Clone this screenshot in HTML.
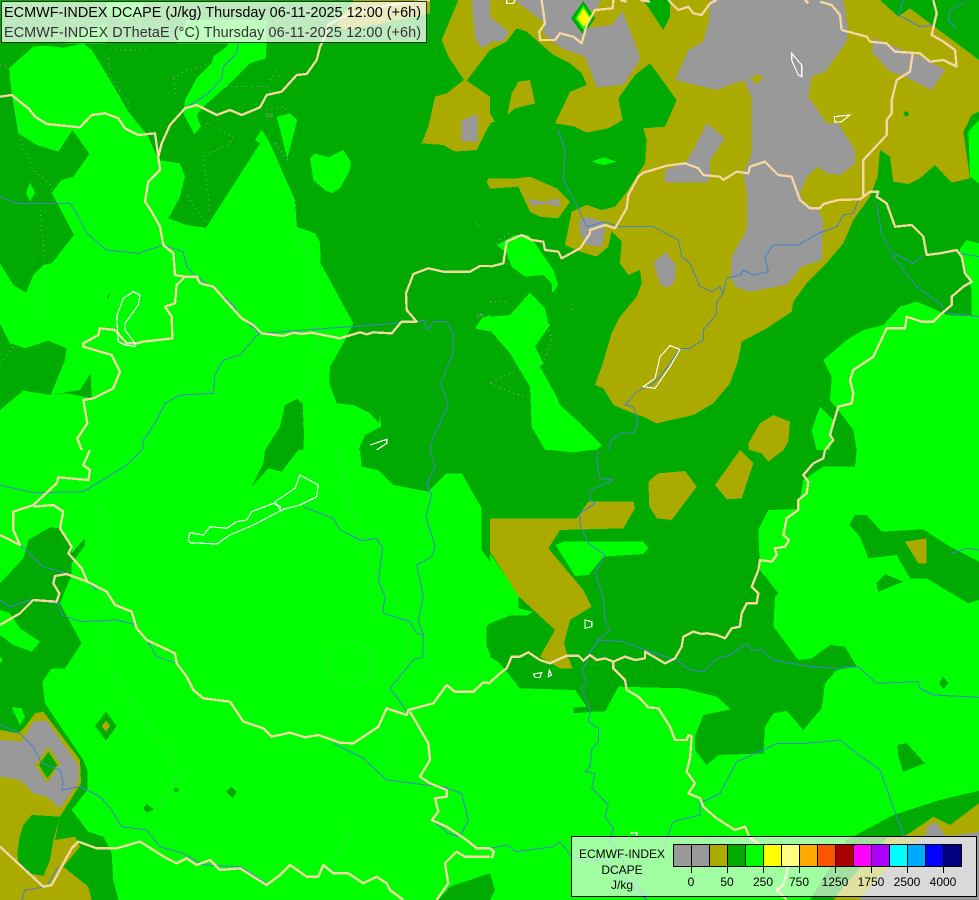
<!DOCTYPE html>
<html>
<head>
<meta charset="utf-8">
<style>
html,body{margin:0;padding:0;background:#0f0;width:979px;height:900px;overflow:hidden}
svg{display:block}
.d{fill:#00aa00}.g{fill:#00ff00}.o{fill:#aaaa00}.y{fill:#999999}.ye{fill:#ffff00}
.b{fill:none;stroke:#f5d7a3;stroke-width:7;stroke-linejoin:round}
.r{fill:none;stroke:#4480cc;stroke-width:3;stroke-linejoin:round}
.w{fill:none;stroke:#fff;stroke-width:3.5}
.p{fill:none;stroke:#b890d0;stroke-width:3;stroke-dasharray:3 12}
text{font-family:"Liberation Sans",sans-serif}
</style>
</head>
<body>
<svg width="979" height="900" viewBox="0 0 979 900" shape-rendering="crispEdges">

<!-- top-left -->
<svg x="0" y="0" width="490" height="450" viewBox="0 0 1470 1350">
<rect class="d" width="1470" height="1350"/>
<polygon class="g" points="100,140 135,137 190,143 250,130 275,150 330,240 385,335 445,410 475,480 540,490 555,530 540,590 505,655 560,675 618,683 780,430 765,420 785,390 805,420 885,600 890,680 945,700 960,725 962,790 1060,970 1030,1030 990,1100 988,1150 1010,1210 1060,1215 1110,1240 1137,1270 1140,1240 1143,1280 1095,1305 1075,1350 910,1350 912,1300 908,1210 890,1197 855,1215 840,1280 795,1350 0,1350 0,790 40,855 78,878 100,825 130,795 155,790 222,705 155,578 185,540 220,530 268,462 218,390 175,455 110,435 55,400 35,280 27,205"/>
<polygon class="d" points="0,970 30,1030 75,1045 145,1022 200,1045 195,1080 152,1185 70,1172 0,1230"/>
<polygon class="d" points="152,1185 200,1180 250,1190 275,1195 272,1120 240,1170"/>
<polygon class="d" points="320,892 332,880 322,898"/>
<polygon class="g" points="90,548 105,578 90,605 78,578"/>
<polygon class="g" points="555,300 590,235 635,190 640,170 680,140 700,100 800,100 798,175 750,190 690,250 610,320 590,345 603,380 583,403 550,340"/>
<polygon class="g" points="530,130 560,60 800,60 800,130"/>
<polygon class="g" points="320,5 430,5 440,40 380,60 320,45"/>
<polygon class="g" points="195,130 240,95 320,70 320,130"/>
<polygon class="g" points="830,350 870,340 892,360 862,475"/>
<polygon class="g" points="930,475 945,460 985,472 1030,450 1052,485 1050,510 1020,565 995,580 975,570 940,540"/>
<polygon class="g" points="1425,985 1445,955 1470,945 1470,995"/>
<polygon class="o" points="1375,0 1325,120 1345,170 1392,240 1340,280 1305,290 1285,380 1265,430 1330,435 1365,455 1430,450 1465,380 1470,375 1470,290 1400,242 1470,150 1470,0"/>
<polygon class="y" points="1415,0 1425,115 1445,145 1470,130 1470,0"/>
<polygon class="y" points="1385,360 1432,343 1432,425 1385,425"/>
<polygon class="o" points="1460,545 1470,530 1470,565"/>
<polygon class="o" points="1060,0 1010,75 1040,90 1120,75 1290,40 1290,0"/>
<path class="p" d="M0,195L25,200M40,300L60,420L100,510L160,560M120,630L135,790L125,950M325,175L330,230L385,310L395,370M520,235L530,290M520,235L560,210L620,195M680,260L800,260L815,280M810,240L830,215L845,240M800,330L850,320L880,370M620,370L700,410L690,430L610,470L630,640M330,150L440,150M550,560L580,620L620,670M825,430L870,490M885,600L890,680L930,790L930,900L960,1000L945,1100L900,1200L912,1290M0,1090L40,1040M1425,665L1440,680"/>
<path class="r" d="M0,590L45,610L210,610L230,640L260,700L320,750L415,760L490,735L550,755L560,800L590,830L660,880L700,915L720,950L780,1000L765,1012L720,1065L670,1080L645,1125L640,1180L540,1185L495,1210L465,1270L430,1320L428,1350"/>
<path class="r" d="M715,130L710,160L670,200L665,235L625,280L555,325L510,375L480,450"/>
<path class="r" d="M780,1000L1250,965L1275,960L1280,990L1300,965L1340,965L1360,1000L1358,1060L1322,1150L1345,1215L1300,1310L1290,1350"/>
<path class="b" d="M0,290L35,285L85,325L105,350L140,372L240,382L275,345L315,340L355,355L375,385L415,405L465,400L475,470L480,510L445,545L435,605L455,635L480,680L490,735L520,760L525,825L555,830L530,855L525,910L495,920L515,950L517,1015L430,1025L410,1030L380,1030L345,990L300,985L295,1005L250,1030L250,1040L335,1065L360,1115L340,1165L280,1195L250,1200L262,1270L232,1315L245,1350"/>
<path class="b" d="M475,470L485,430L510,375L555,325L590,315L650,345L690,330L725,345L780,322L800,285L845,275L890,225L920,222L950,180L960,140L975,110L985,75L1020,55L1060,40L1120,25L1170,15L1290,0"/>
<path class="b" d="M555,830L590,830L600,850L640,860L680,905L725,955L760,975L785,1000L850,1008L880,998L905,1002L935,998L1020,1015L1080,997L1100,1003L1120,997L1175,1000L1205,965L1250,965L1220,930L1218,880L1240,822L1285,805L1330,815L1410,815L1440,798L1470,798"/>
<path class="w" d="M400,875L420,885L415,915L375,970L375,990L405,1030L405,1040L375,1035L355,1025L350,950L370,895Z"/>
<path class="w" d="M1110,1335L1160,1318L1160,1330L1130,1350"/>
<text x="0" y="0" font-size="27" fill="#8a9a8a" transform="translate(800,337) rotate(100)">5</text>
<text x="0" y="0" font-size="27" fill="#8a9a8a" transform="translate(1432,938) rotate(100)">5</text>
</svg>

<!-- top-right -->
<svg x="490" y="0" width="489" height="450" viewBox="0 0 1467 1350">
<rect class="d" width="1467" height="1350"/>
<polygon class="o" points="0,0 1170,0 1225,50 1260,25 1340,85 1467,180 1467,335 1445,345 1420,395 1440,535 1385,548 1335,495 1290,535 1255,552 1210,545 1200,470 1170,450 1163,530 1140,590 1090,660 1060,730 1000,800 950,850 910,905 905,935 830,985 755,1025 745,1080 720,1150 670,1210 610,1245 500,1270 460,1250 430,1240 370,1215 340,1165 315,1155 335,1100 365,1000 390,950 440,890 455,850 450,810 415,825 390,790 395,725 365,695 355,740 320,770 270,755 225,735 245,635 290,615 335,630 375,620 415,570 445,520 465,490 470,420 460,385 525,380 560,300 480,190 435,225 385,295 398,360 355,385 290,398 255,380 195,370 240,275 290,255 275,220 240,190 190,165 150,130 110,95 80,85 50,125 0,150"/>
<polygon class="d" points="460,0 540,0 540,50 520,90"/>
<polygon class="d" points="1240,340 1248,332 1257,342 1248,352"/>
<polygon class="y" points="75,0 330,0 325,20 290,40 285,85 365,75 398,35 452,175 400,255 320,262 285,170 215,145 160,100 165,70"/>
<polygon class="y" points="0,50 55,95 40,125 0,125"/>
<polygon class="y" points="660,0 1060,0 1075,90 1070,125 1005,215 965,230 955,290 1010,370 1045,370 1095,450 1095,490 1050,525 1010,520 985,500 950,530 930,580 945,610 985,630 1000,660 995,780 935,800 890,855 780,875 735,860 722,830 725,770 770,690 772,590 760,520 785,460 785,295 765,245 745,245 680,270 555,240 595,150 640,125 658,60"/>
<polygon class="o" points="780,235 805,222 820,232 800,252"/>
<polygon class="y" points="1155,115 1190,130 1250,155 1290,170 1365,210 1325,270 1235,225 1200,215 1145,155"/>
<polygon class="y" points="525,510 585,490 610,450 650,370 705,415 660,480 660,530 650,548 525,548"/>
<polygon class="y" points="490,790 527,755 557,795 555,845 530,865 510,850"/>
<polygon class="y" points="268,660 290,650 340,665 345,690 335,740 290,735 270,700"/>
<polygon class="o" points="0,535 80,535 120,530 200,565 240,605 205,655 150,650 120,635 85,560 20,565 0,565"/>
<polygon class="y" points="115,598 165,605 205,595 212,620 165,612 125,617"/>
<polygon class="o" points="65,280 85,245 120,240 135,310 75,325 52,345"/>
<polygon class="o" points="0,340 15,365 0,370"/>
<polygon class="g" points="305,485 340,472 380,485 340,495"/>
<polygon class="d" points="280,3 315,55 280,105 243,55"/>
<polygon class="g" points="280,15 305,55 280,90 255,55"/>
<polygon class="ye" points="280,24 300,55 280,80 262,55"/>
<polygon class="g" points="0,950 60,945 120,878 165,925 175,970 180,975 135,1040 160,1090 150,1100 200,1190 210,1215 270,1270 335,1335 320,1350 165,1350 125,1280 120,1160 60,1060 0,990"/>
<polygon class="g" points="20,735 75,705 115,705 135,730 190,810 205,855 187,880 185,850 160,825 105,830 65,800 50,760"/>
<polygon class="g" points="1000,1080 1070,1020 1120,990 1180,975 1230,920 1280,905 1340,930 1370,945 1467,950 1467,1350 1100,1350 1090,1290 1060,1250 1020,1200 1025,1130"/>
<polygon class="g" points="990,1220 1030,1260 1020,1350 980,1350 965,1290"/>
<polygon class="g" points="1410,745 1430,720 1467,730 1467,950 1445,945 1445,870 1425,800 1410,770"/>
<polygon class="g" points="1435,395 1467,360 1467,550 1440,530"/>
<polygon class="o" points="775,1330 810,1270 850,1245 900,1265 895,1325 880,1350 775,1350"/>
<path class="p" d="M20,730L60,695M0,905L50,905L90,940L170,970L185,1020L160,1090L60,1120L0,1150M0,1150L70,1180L130,1195L180,1170M50,790L135,770M245,910L245,930"/>
<path class="r" d="M205,390L225,450L220,540L265,625L290,680L345,665L385,680L490,680L565,720L575,770L600,790L630,860L665,875L690,860L700,880L680,905L678,945L640,990L640,1020L600,1045L570,1045L540,1090L510,1130L490,1150L440,1175L405,1215L430,1220L445,1265L430,1300L395,1298L365,1320L355,1350"/>
<path class="r" d="M700,880L710,835L750,825L760,810L790,825L835,815L825,770L850,735L925,735L985,700L1040,680L1060,645L1090,640L1105,600"/>
<path class="r" d="M1160,610L1175,700L1210,770L1280,860L1350,910L1375,940L1467,950M1210,760L1270,790L1300,765M1410,760L1467,770"/>
<path class="r" d="M1240,0L1225,45L1290,80L1330,75M1430,5L1380,30L1375,60L1400,85"/>
<path class="b" d="M0,800L40,790L50,725L95,705L125,720L160,725L165,750L205,755L215,775L270,745L300,700L300,690L345,675L375,685L410,625L415,585L445,530L460,518L530,497L585,490L625,505L640,525L690,530L700,540L740,515L775,520L780,500L825,485L865,525L905,530L930,600L960,625L990,625L1000,612L1045,600L1110,598L1140,575L1165,575L1160,590L1190,610L1215,680L1265,675L1300,710L1310,765L1350,760L1400,750L1415,770L1425,820L1445,845L1420,860L1385,890L1385,915L1350,945L1330,965L1295,965L1250,950L1245,985L1190,985L1150,1070L1090,1110L1080,1140L1090,1180L1085,1210L1045,1220L1030,1270L1020,1305L1030,1320L1005,1350"/>
<path class="b" d="M1120,590L1120,480L1190,405L1190,360L1205,340L1205,300L1220,240L1260,215L1268,160M1055,90L1130,110L1140,125L1190,130L1215,155L1290,160L1320,185L1360,180L1400,200L1395,150L1360,125L1325,105L1340,40L1330,0M1055,90L1050,45L1025,15L990,5"/>
<path class="b" d="M155,0L165,70L148,95L150,120L195,120L210,100L250,110L275,130L290,75L315,30L368,25L370,0M535,0L565,30L595,20L610,40L635,45L660,10L680,0M945,0L955,10M390,0L410,5M450,0L480,5"/>
<path class="w" d="M905,160L935,195L935,230L925,225L905,180Z"/>
<path class="w" d="M1033,350L1080,345L1055,365L1035,367Z"/>
<path class="w" d="M540,1037L570,1048L540,1100L495,1165L460,1160L495,1135L510,1070Z"/>
<path class="w" d="M50,0L50,10L70,10L75,0"/>
</svg>

<!-- bottom-left -->
<svg x="0" y="450" width="490" height="450" viewBox="0 0 1470 1350">
<rect class="g" width="1470" height="1350"/>
<polygon class="d" points="795,0 895,0 845,65 805,55 755,110 790,40"/>
<polygon class="d" points="1080,0 1470,0 1470,335 1445,300 1445,175 1385,70 1340,70 1285,125 1180,105 1135,60 1085,50"/>
<polygon class="d" points="1460,530 1470,520 1470,610 1460,590"/>
<polygon class="d" points="1315,1350 1350,1310 1470,1270 1470,1350"/>
<polygon class="d" points="0,400 70,325 85,270 150,232 180,235 215,300 215,375 180,460 245,580 195,655 155,655 127,695 135,760 250,930 262,960 262,1020 215,1080 265,1145 310,1160 335,1210 340,1290 355,1350 0,1350"/>
<polygon class="d" points="215,310 255,265 255,285 215,340"/>
<polygon class="g" points="0,480 30,490 60,535 120,575 95,605 40,585 0,555"/>
<polygon class="g" points="0,620 8,630 0,640"/>
<polygon class="g" points="35,772 65,775 75,800 60,825"/>
<polygon class="o" points="0,840 55,850 75,830 105,790 130,785 240,930 243,1000 180,1100 165,1170 225,1160 240,1190 190,1250 265,1310 275,1350 0,1350"/>
<polygon class="d" points="95,1095 180,1100 160,1170 150,1230 130,1278 90,1270 55,1235 52,1210 58,1165 70,1125"/>
<polygon class="y" points="0,870 65,875 100,815 140,812 235,945 235,995 180,1075 140,1040 100,1030 60,990 0,980"/>
<polygon class="o" points="145,890 180,940 142,1000 105,945"/>
<polygon class="d" points="145,905 172,945 142,985 117,945"/>
<polygon class="d" points="318,785 350,828 318,872 285,828"/>
<polygon class="o" points="318,812 330,828 318,845 305,828"/>
<polygon class="d" points="528,1012 538,1020 528,1028 520,1020"/>
<polygon class="d" points="693,1010 710,1025 698,1045 678,1025"/>
<polygon class="d" points="440,1063 462,1078 440,1088 430,1075"/>
<path class="p" d="M300,170L310,400L320,530L300,590L400,780L520,920L535,980L470,1080M1010,0L1080,270L1140,410L1230,500L1220,600L1190,790L1175,980M1040,1090L1050,1150L990,1240"/>
<circle class="p" cx="1050" cy="640" r="65"/>
<path class="r" d="M0,105L100,128L250,125L300,95L380,45L425,0"/>
<path class="r" d="M0,255L60,285L130,350L215,375L262,395L290,420"/>
<path class="r" d="M0,450L30,470L90,450L175,460L185,495L245,515L350,510L410,525"/>
<path class="r" d="M440,570L470,620L530,640"/>
<path class="r" d="M910,170L1000,205L1020,240L1085,272L1130,265L1148,295L1135,390L1155,440L1148,488L1230,515L1250,550L1270,555L1268,620L1240,630L1170,715L1225,790"/>
<path class="r" d="M1290,0L1305,50L1280,105L1295,135L1278,200L1305,290L1295,320L1250,345L1270,440L1255,510L1270,555"/>
<path class="r" d="M1000,880L1090,925L1160,990L1280,1005L1330,1010L1385,1030L1405,1110L1380,1160L1345,1150L1290,1105"/>
<path class="r" d="M0,825L60,850L100,890L125,940L180,960L190,1000L185,1020L240,1010L300,1040L335,1080L365,1130L440,1140L480,1190L550,1210L610,1245L720,1250L800,1300"/>
<path class="r" d="M175,1250L140,1310L75,1320L65,1350"/>
<path class="b" d="M270,0L250,45L270,60L265,90L175,82L170,100L100,165L40,185L40,240L60,285L0,255"/>
<path class="b" d="M100,170L160,165L190,185L180,235L215,290L205,310L245,355L262,395L320,425L345,465L395,485L410,535L440,570L525,610L530,640L560,680L580,720L610,745L690,755L730,815L790,835L815,860L870,848L915,862L955,855L1020,878L1060,880L1135,830L1160,775L1220,795L1225,780L1300,760L1340,705L1365,725L1420,725L1450,697L1470,700"/>
<path class="b" d="M262,395L200,372L165,378L160,400L178,430L170,455L100,450L60,490L0,525"/>
<path class="b" d="M1230,785L1285,880L1290,930L1260,980L1290,1000L1340,1020L1340,1040L1305,1045L1315,1085L1295,1110L1340,1130L1400,1170L1430,1195L1470,1195"/>
<path class="b" d="M1470,1220L1395,1220L1370,1205L1335,1240L1345,1300L1320,1335L1310,1350"/>
<path class="b" d="M0,1190L130,1310L155,1305L215,1195L235,1175L290,1195L350,1195L420,1175L500,1225L530,1240L560,1225L590,1245L630,1230L660,1260L720,1255L800,1305L840,1275L870,1245L920,1280L955,1280L970,1245L1000,1270L1045,1270L1090,1300L1130,1280L1160,1300L1170,1320L1210,1350"/>
<path class="w" d="M570,248L610,255L630,230L680,235L710,215L740,210L755,185L820,160L842,170L840,178L825,155L885,115L900,75L955,105L950,140L900,165L850,178L760,225L690,255L650,282L570,278L565,268Z"/>
</svg>

<!-- bottom-right -->
<svg x="490" y="450" width="489" height="450" viewBox="0 0 1467 1350">
<rect class="d" width="1467" height="1350"/>
<polygon class="g" points="0,620 30,640 90,715 255,720 290,770 250,773 250,790 310,785 345,785 385,710 580,715 680,740 722,778 640,795 615,860 615,900 650,945 685,915 820,910 825,830 850,790 890,783 940,840 995,775 1005,700 1040,660 1100,650 1065,590 1020,585 965,625 925,630 850,530 855,440 865,430 810,360 805,240 835,180 925,177 940,90 1000,50 1095,50 1100,0 1467,0 1467,1350 0,1350"/>
<polygon class="g" points="0,310 85,435 85,475 130,485 110,497 60,497 0,520"/>
<polygon class="g" points="180,0 300,0 250,8"/>
<polygon class="d" points="1078,225 1095,195 1130,195 1175,245 1300,238 1380,290 1467,335 1467,450 1435,460 1310,385 1260,385 1220,315 1135,325 1110,260"/>
<polygon class="d" points="1160,400 1185,372 1240,395 1165,425"/>
<polygon class="o" points="1245,275 1310,265 1310,340 1285,340"/>
<polygon class="d" points="1360,680 1375,700 1360,717 1347,700"/>
<polygon class="d" points="1222,885 1250,880 1305,940 1240,965 1225,920"/>
<polygon class="d" points="0,1270 15,1320 0,1350"/>
<polygon class="d" points="960,1350 1070,1170 1210,1095 1350,1050 1467,1022 1467,1350"/>
<polygon class="o" points="1030,1350 1060,1310 1190,1165 1250,1155 1330,1100 1380,1125 1467,1060 1467,1350"/>
<polygon class="y" points="1105,1350 1240,1200 1310,1150 1310,1130 1335,1115 1370,1160 1467,1145 1467,1350"/>
<polygon class="o" points="750,0 790,40 755,145 710,148 675,105"/>
<polygon class="o" points="780,0 880,0 835,35 815,10"/>
<polygon class="o" points="475,95 505,70 585,63 620,110 545,210 500,205 478,170"/>
<polygon class="o" points="0,205 260,205 295,155 430,155 435,175 400,235 210,240 175,295 280,420 305,470 240,510 222,580 232,615 248,655 210,655 150,620 195,540 85,438 0,305"/>
<polygon class="g" points="197,285 220,275 460,275 475,295 460,312 340,320 295,375 255,378"/>
<path class="r" d="M325,0L320,35L330,85L370,90L350,100L300,120L300,150L315,160L270,190L270,225L295,280L345,315L315,370L340,440L345,510L360,540L325,570L295,615L290,640L275,660L290,695L275,715L300,780L295,815L325,835L325,875L305,900L300,950L285,965L315,970L305,1015L355,1065L345,1100L370,1135L360,1170L380,1200L420,1270L470,1350"/>
<path class="r" d="M320,570L400,575L465,600L560,630L600,660L640,665L680,625L720,615L770,580L785,600L815,600L850,630L960,650L1040,655L1105,650L1160,700L1285,695L1290,715L1330,735L1467,742"/>
<path class="r" d="M810,905L860,880L950,880L1050,870L1100,910L1170,960L1220,1100L1250,1180"/>
<path class="r" d="M820,900L740,935L690,1030L630,1060L630,1095L550,1115L520,1190"/>
<path class="r" d="M0,1195L50,1185L80,1205L190,1190L210,1175L245,1220L290,1235L340,1225L420,1300L470,1350"/>
<path class="r" d="M1385,310L1430,295L1467,300"/>
<path class="b" d="M1005,0L1000,25L970,40L940,75L955,95L950,130L925,150L925,180L890,205L880,255L897,270L885,290L855,295L860,315L845,335L810,330L805,360L785,410L805,430L800,460L770,460L755,490L750,530L725,535L705,565L680,555L650,550L635,552L610,545L580,560L575,590L555,625L525,640L465,605L465,625L435,630L405,620L370,635L370,655L405,690L410,720L445,740L475,772L505,775L540,830L555,870L590,870L595,855L605,860L600,925L590,965L615,1000L595,1030L630,1045L640,1070L680,1105L735,1140L765,1130L780,1165L820,1190L895,1250L880,1305L860,1320L890,1350"/>
<path class="b" d="M370,635L345,625L320,630L300,615L280,632L265,617L230,617L180,640L150,630L115,607L90,620L65,620L50,655L30,670L0,697"/>
<path class="b" d="M0,1195L12,1205L5,1225"/>
<path class="w" d="M285,510L305,515L305,530L285,535Z"/>
<path class="w" d="M130,672L155,668L150,682L135,682Z"/>
<path class="w" d="M178,660L185,675L175,680Z"/>
<path class="w" d="M420,1150L440,1148L440,1160"/>
</svg>

<!-- title box -->
<rect x="1.5" y="1.5" width="425" height="41" fill="#ffffff" fill-opacity="0.75" stroke="#1a3a1a" stroke-width="1"/>
<text x="4" y="17" font-size="14.4" fill="#000" textLength="417" lengthAdjust="spacing">ECMWF-INDEX DCAPE (J/kg) Thursday 06-11-2025 12:00 (+6h)</text>
<text x="4" y="37" font-size="14.4" fill="#333" textLength="417" lengthAdjust="spacing">ECMWF-INDEX DThetaE (°C) Thursday 06-11-2025 12:00 (+6h)</text>

<!-- legend -->
<rect x="571.5" y="836.5" width="405" height="60" fill="#ffffff" fill-opacity="0.63" stroke="#000" stroke-width="1"/>
<text x="622" y="858" font-size="12" text-anchor="middle" fill="#000">ECMWF-INDEX</text>
<text x="622" y="874" font-size="12" text-anchor="middle" fill="#000">DCAPE</text>
<text x="622" y="889" font-size="12" text-anchor="middle" fill="#000">J/kg</text>
<rect x="673" y="844" width="18" height="22" fill="#999999"/>
<rect x="691" y="844" width="18" height="22" fill="#999999"/>
<rect x="709" y="844" width="18" height="22" fill="#aaaa00"/>
<rect x="727" y="844" width="18" height="22" fill="#00aa00"/>
<rect x="745" y="844" width="18" height="22" fill="#00ff00"/>
<rect x="763" y="844" width="18" height="22" fill="#ffff00"/>
<rect x="781" y="844" width="18" height="22" fill="#ffff7f"/>
<rect x="799" y="844" width="18" height="22" fill="#ffaa00"/>
<rect x="817" y="844" width="18" height="22" fill="#ff5500"/>
<rect x="835" y="844" width="18" height="22" fill="#aa0000"/>
<rect x="853" y="844" width="18" height="22" fill="#ff00ff"/>
<rect x="871" y="844" width="18" height="22" fill="#aa00ff"/>
<rect x="889" y="844" width="18" height="22" fill="#00ffff"/>
<rect x="907" y="844" width="18" height="22" fill="#00aaff"/>
<rect x="925" y="844" width="18" height="22" fill="#0000ff"/>
<rect x="943" y="844" width="18" height="22" fill="#000080"/>
<path d="M673.5,844.5H961.5V866.5H673.5ZM691.5,844.5V873M709.5,844.5V866M727.5,844.5V873M745.5,844.5V866M763.5,844.5V873M781.5,844.5V866M799.5,844.5V873M817.5,844.5V866M835.5,844.5V873M853.5,844.5V866M871.5,844.5V873M889.5,844.5V866M907.5,844.5V873M925.5,844.5V866M943.5,844.5V873" fill="none" stroke="#000" stroke-width="1"/>
<g font-size="12" text-anchor="middle" fill="#000">
<text x="691" y="886">0</text>
<text x="727" y="886">50</text>
<text x="763" y="886">250</text>
<text x="799" y="886">750</text>
<text x="835" y="886">1250</text>
<text x="871" y="886">1750</text>
<text x="907" y="886">2500</text>
<text x="943" y="886">4000</text>
</g>
</svg>
</body>
</html>
